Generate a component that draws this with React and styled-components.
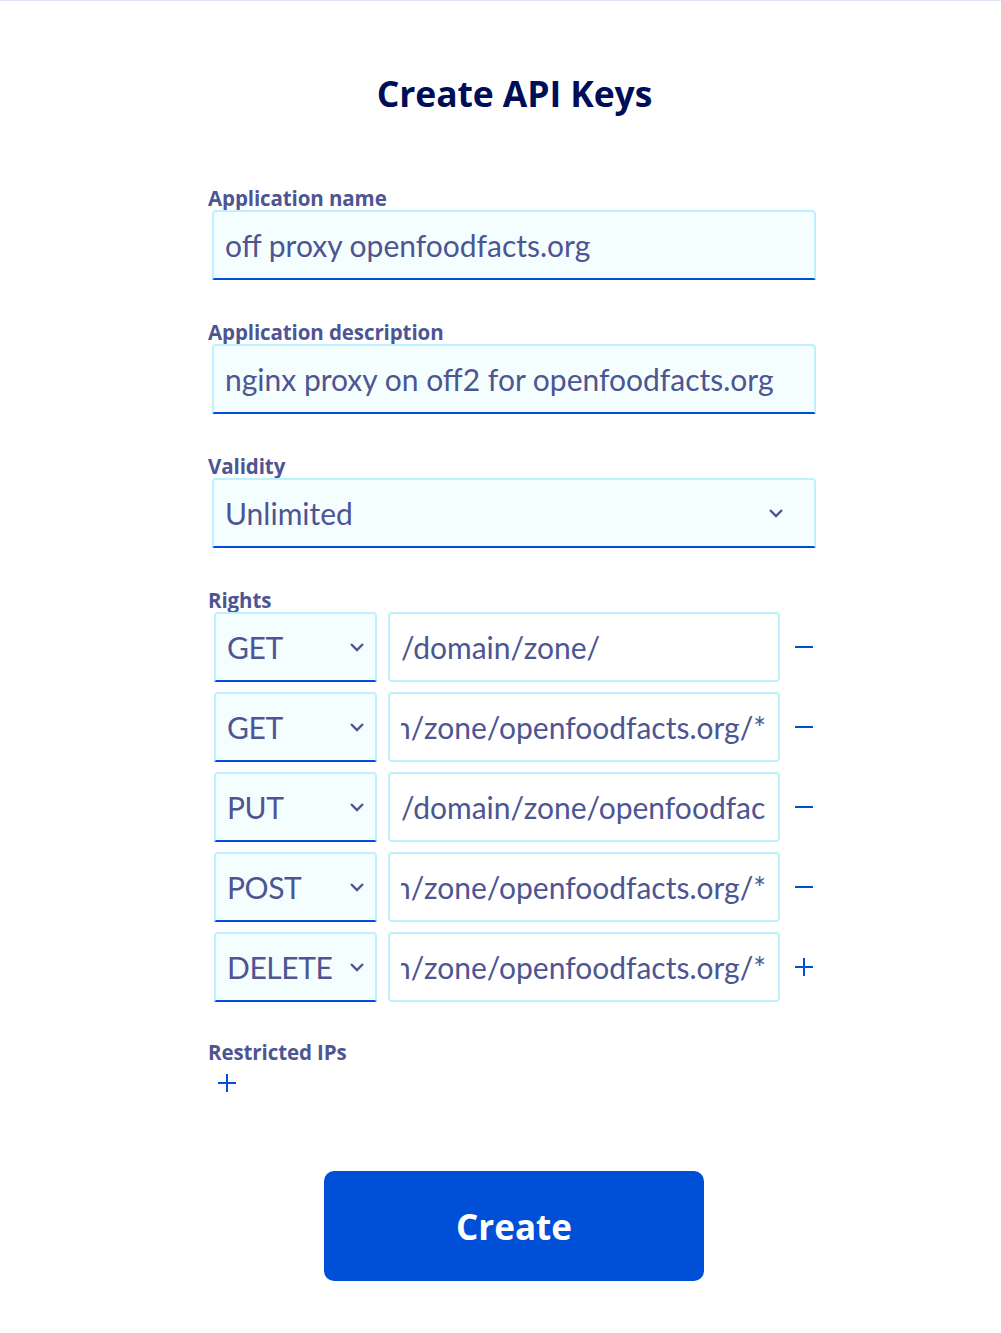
import React from "react";
import styled, { createGlobalStyle } from "styled-components";

const Global = createGlobalStyle`
  html, body { margin: 0; padding: 0; background: #fff; }
  body { font-family: "Lato", "Noto Sans", sans-serif; }
  * { box-sizing: border-box; }
`;

const Page = styled.div`
  border-top: 1px solid #e0e5f5;
  min-height: 1333px;
  padding-top: 69px;
`;

const Title = styled.h1`
  margin: 0 0 70px 0;
  padding-left: 28px;
  text-align: center;
  font-family: "Open Sans", "Noto Sans", sans-serif;
  font-weight: 700;
  font-size: 35.5px;
  line-height: 46px;
  color: #000e58;
  letter-spacing: -0.1px;
`;

const Form = styled.form`
  width: 608px;
  margin-left: 208px;
  display: flex;
  flex-direction: column;
`;

const Field = styled.div`
  display: flex;
  flex-direction: column;
  margin-bottom: ${(p) => p.$mb ?? 40}px;
`;

const Label = styled.label`
  font-family: "Open Sans", "Noto Sans", sans-serif;
  font-weight: 700;
  font-size: 20.5px;
  line-height: 24px;
  letter-spacing: -0.1px;
  color: #4d5592;
  height: 24px;
`;

const Box = styled.div`
  height: 70px;
  margin-left: ${(p) => p.$ml ?? 4}px;
  background: ${(p) => (p.$plain ? "#fff" : "#f5feff")};
  border: 2px solid #bef1ff;
  border-bottom: 2px solid ${(p) => (p.$plain ? "#bef1ff" : "#0050d7")};
  border-radius: 4px;
  ${(p) => !p.$plain && "border-bottom-left-radius: 2px; border-bottom-right-radius: 2px;"}
  display: flex;
  align-items: center;
  padding: 0 12px 0 11px;
  color: #4d5592;
  font-size: 30px;
  white-space: nowrap;
  ${(p) => p.$w && `width: ${p.$w}px; flex: none;`}
`;

const Value = styled.span`
  flex: 1;
  min-width: 0;
  white-space: nowrap;
  letter-spacing: ${(p) => (p.$tight ? "-0.4px" : "0")};
`;

const Scroller = styled.div`
  flex: 1;
  min-width: 0;
  height: 100%;
  display: flex;
  align-items: center;
  justify-content: ${(p) => (p.$end ? "flex-end" : "flex-start")};
  overflow: hidden;
`;

const Clip = styled.span`
  white-space: nowrap;
  flex: none;
`;

const Chevron = ({ $small }) => (
  <svg width="16" height="10" viewBox="0 0 16 10" style={{ flex: "none", marginRight: $small ? -2 : 18 }}>
    <path d="M2 2 L8 8 L14 2" fill="none" stroke="#4d5592" strokeWidth="2.4" />
  </svg>
);

const Rows = styled.div`
  display: flex;
  flex-direction: column;
  gap: 10px;
`;

const Row = styled.div`
  display: flex;
  align-items: center;
  gap: 11px;
  padding-left: 6px;
`;

const IconBtn = styled.button`
  background: none;
  border: none;
  padding: 0;
  margin-left: 0;
  width: 30px;
  height: 30px;
  display: flex;
  align-items: center;
  justify-content: center;
  cursor: pointer;
`;

const Minus = () => (
  <svg width="20" height="20" viewBox="0 0 20 20">
    <path d="M1 10 H19" stroke="#0050d7" strokeWidth="2" />
  </svg>
);

const Plus = () => (
  <svg width="20" height="20" viewBox="0 0 20 20">
    <path d="M1 10 H19 M10 1 V19" stroke="#0050d7" strokeWidth="2" />
  </svg>
);

const AddIp = styled(IconBtn)`
  margin: 4px 0 0 8px;
  justify-content: flex-start;
  padding-left: 1px;
`;

const Actions = styled.div`
  display: flex;
  justify-content: center;
  padding-left: 4px;
  margin-top: 73px;
`;

const CreateButton = styled.button`
  width: 380px;
  height: 110px;
  border: none;
  border-radius: 10px;
  background: #0050d7;
  color: #fff;
  font-family: "Open Sans", "Noto Sans", sans-serif;
  font-weight: 700;
  font-size: 35px;
  cursor: pointer;
`;

const rights = [
  { m: "GET", p: "/domain/zone/", end: false, icon: "minus" },
  { m: "GET", p: "/domain/zone/openfoodfacts.org/*", end: true, icon: "minus" },
  { m: "PUT", p: "/domain/zone/openfoodfacts.org/*", end: false, icon: "minus" },
  { m: "POST", p: "/domain/zone/openfoodfacts.org/*", end: true, icon: "minus" },
  { m: "DELETE", p: "/domain/zone/openfoodfacts.org/*", end: true, icon: "plus" },
];

export default function App() {
  return (
    <>
      <Global />
      <Page>
        <Title>Create API Keys</Title>
        <Form onSubmit={(e) => e.preventDefault()}>
          <Field>
            <Label>Application name</Label>
            <Box>
              <Value>off proxy openfoodfacts.org</Value>
            </Box>
          </Field>
          <Field>
            <Label>Application description</Label>
            <Box>
              <Value>nginx proxy on off2 for openfoodfacts.org</Value>
            </Box>
          </Field>
          <Field>
            <Label>Validity</Label>
            <Box>
              <Value>Unlimited</Value>
              <Chevron />
            </Box>
          </Field>
          <Field $mb={38}>
            <Label>Rights</Label>
            <Rows>
              {rights.map((r, i) => (
                <Row key={i}>
                  <Box $ml={0} $w={163}>
                    <Value $tight>{r.m}</Value>
                    <Chevron $small />
                  </Box>
                  <Box $ml={0} $w={392} $plain>
                    <Scroller $end={r.end}>
                      <Clip>{r.p}</Clip>
                    </Scroller>
                  </Box>
                  <IconBtn type="button">{r.icon === "plus" ? <Plus /> : <Minus />}</IconBtn>
                </Row>
              ))}
            </Rows>
          </Field>
          <Field $mb={0}>
            <Label>Restricted IPs</Label>
            <AddIp type="button">
              <Plus />
            </AddIp>
          </Field>
          <Actions>
            <CreateButton type="submit">Create</CreateButton>
          </Actions>
        </Form>
      </Page>
    </>
  );
}
